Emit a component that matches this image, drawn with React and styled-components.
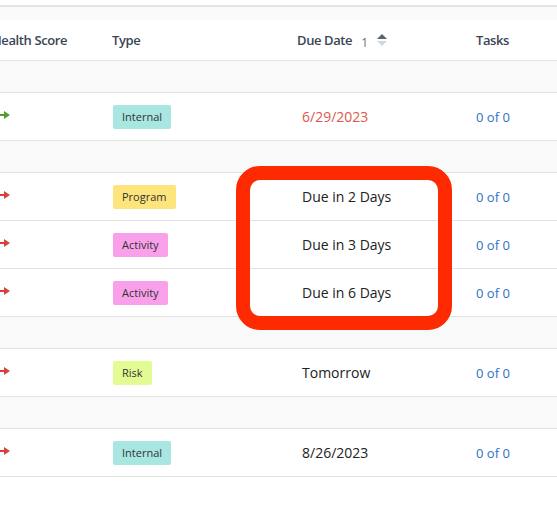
import React from "react";
import styled, { createGlobalStyle } from "styled-components";

const GlobalStyle = createGlobalStyle`
  html, body {
    margin: 0;
    padding: 0;
    background: #ffffff;
    font-family: "Open Sans", "Noto Sans", sans-serif;
  }
`;

const rows = [
  { group: true },
  { health: "good", type: "Internal", due: "6/29/2023", overdue: true },
  { group: true },
  { health: "bad", type: "Program", due: "Due in 2 Days" },
  { health: "bad", type: "Activity", due: "Due in 3 Days" },
  { health: "bad", type: "Activity", due: "Due in 6 Days" },
  { group: true },
  { health: "bad", type: "Risk", due: "Tomorrow" },
  { group: true },
  { health: "bad", type: "Internal", due: "8/26/2023" },
];

const badgeColors = {
  Internal: "#a8e6e2",
  Program: "#fde47c",
  Activity: "#f9a0eb",
  Risk: "#e2fb92",
};

const Arrow = ({ color }) => (
  <svg width="14" height="10" viewBox="0 0 14 10">
    <rect x="0" y="4" width="9" height="2" fill={color} />
    <polygon points="8,1 14,5 8,9" fill={color} />
  </svg>
);

const SortIcon = () => (
  <svg width="10" height="14" viewBox="0 0 10 14">
    <polygon points="5,1 10,6 0,6" fill="#556270" />
    <polygon points="5,13 10,8 0,8" fill="#d3d7dc" />
  </svg>
);

const App = () => {
  return (
    <Page>
      <GlobalStyle />
      <TopEdge />
      <Toolbar />
      <Viewport>
        <Table>
          <HeaderRow>
            <HeadCell>Health Score</HeadCell>
            <HeadCell>Type</HeadCell>
            <HeadCell>
              Due Date
              <SortOrder>1</SortOrder>
              <SortIcon />
            </HeadCell>
            <HeadCell>Tasks</HeadCell>
            <HeadCell />
          </HeaderRow>
          {rows.map((r, i) =>
            r.group ? (
              <GroupRow key={i} />
            ) : (
              <Row key={i}>
                <HealthCell>
                  <Arrow color={r.health === "good" ? "#5b9a31" : "#d9403f"} />
                </HealthCell>
                <Cell>
                  <Badge $bg={badgeColors[r.type]}>{r.type}</Badge>
                </Cell>
                <DueCell $overdue={r.overdue}>{r.due}</DueCell>
                <Cell>
                  <TaskLink>0 of 0</TaskLink>
                </Cell>
                <Cell />
              </Row>
            )
          )}
        </Table>
        <Highlight />
      </Viewport>
    </Page>
  );
};

export default App;

const Page = styled.div`
  width: 557px;
  height: 520px;
  overflow: hidden;
  background: #ffffff;
`;

const TopEdge = styled.div`
  height: 5px;
  background: #ffffff;
  border-bottom: 2px solid #e4e4e4;
`;

const Toolbar = styled.div`
  height: 13px;
  background: #fafafa;
`;

const Viewport = styled.div`
  position: relative;
  overflow: hidden;
`;

const Table = styled.div`
  margin-left: -30px;
  width: 620px;
`;

const columns = "142px 185px 179px 120px 1fr";

const HeaderRow = styled.div`
  display: grid;
  grid-template-columns: ${columns};
  height: 40px;
  background: #ffffff;
  border-bottom: 1px solid #e2e2e2;
`;

const HeadCell = styled.div`
  display: flex;
  align-items: center;
  font-size: 13px;
  font-weight: 600;
  letter-spacing: -0.4px;
  color: #3a4553;
  white-space: nowrap;
  &:first-child {
    padding-left: 22px;
  }
`;

const SortOrder = styled.span`
  font-size: 12px;
  font-weight: 400;
  color: #707070;
  margin: 5px 9px 0 9px;
`;

const GroupRow = styled.div`
  height: 31px;
  background: #f9f9f9;
  border-bottom: 1px solid #e2e2e2;
`;

const Row = styled.div`
  display: grid;
  grid-template-columns: ${columns};
  height: 47px;
  background: #ffffff;
  border-bottom: 1px solid #e2e2e2;
`;

const Cell = styled.div`
  display: flex;
  align-items: center;
  font-size: 14px;
  color: #222222;
  white-space: nowrap;
`;

const HealthCell = styled(Cell)`
  padding-left: 26px;
  padding-bottom: 4px;
`;

const DueCell = styled(Cell)`
  padding-left: 5px;
  color: ${(p) => (p.$overdue ? "#e0574d" : "#222222")};
`;

const Badge = styled.span`
  display: inline-flex;
  align-items: center;
  height: 24px;
  padding: 0 9px;
  margin-left: 1px;
  border-radius: 2px;
  font-size: 11px;
  color: #333333;
  background: ${(p) => p.$bg};
`;

const TaskLink = styled.span`
  color: #2e72c5;
  font-size: 13px;
`;

const Highlight = styled.div`
  position: absolute;
  left: 236px;
  top: 146px;
  width: 188px;
  height: 136px;
  border: 14px solid #fd2a02;
  border-radius: 24px;
  pointer-events: none;
`;
